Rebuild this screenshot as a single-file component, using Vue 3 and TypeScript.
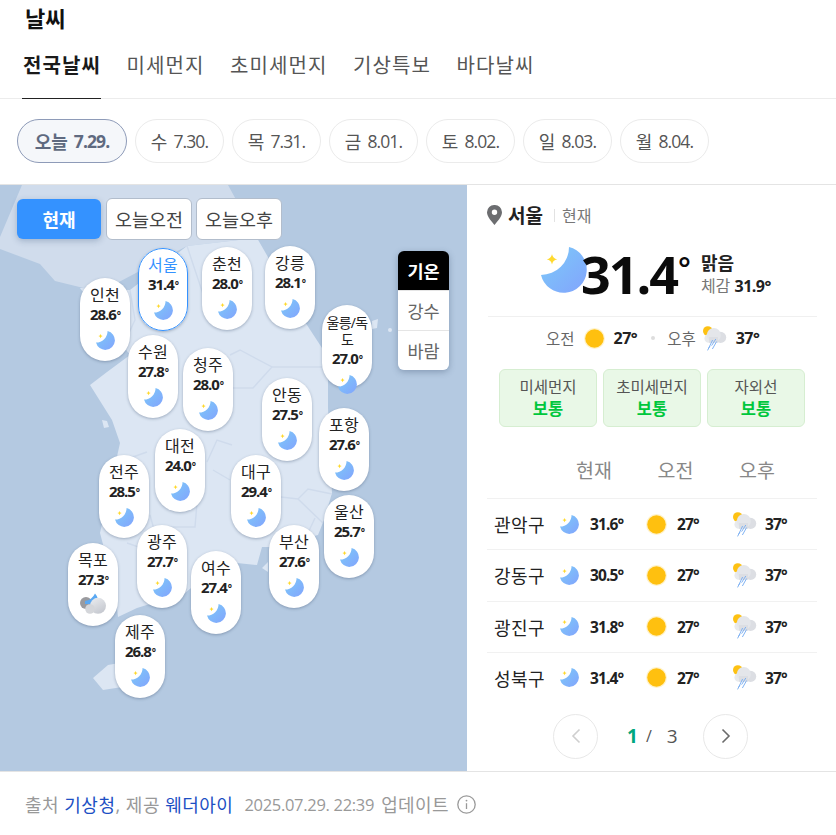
<template>
  <div class="page">
    <svg class="icon-defs" width="0" height="0" aria-hidden="true">
      <defs>
        <linearGradient id="moonFill" x1="0" y1="0" x2="1" y2="1">
          <stop offset="0" stop-color="#7ccbf8" />
          <stop offset="1" stop-color="#82a4fd" />
        </linearGradient>
        <linearGradient id="cloudFill" x1="0" y1="0" x2="0.6" y2="1">
          <stop offset="0" stop-color="#eceef1" />
          <stop offset="1" stop-color="#c6c9d0" />
        </linearGradient>
        <symbol id="moon" viewBox="0 0 46 46">
          <path d="M28 0A23.2 23.2 0 1 1 0 28A28 28 0 0 0 28 0Z" fill="url(#moonFill)" />
          <path d="M11 7Q11.8 11.4 16.2 12.3Q11.8 13.2 11 17.5Q10.2 13.2 5.8 12.3Q10.2 11.4 11 7Z" fill="#ffd92e" />
        </symbol>
        <symbol id="sun" viewBox="0 0 22 22">
          <circle cx="11" cy="11" r="11" fill="#fff3cc" />
          <circle cx="11" cy="11" r="9.7" fill="#ffc00f" />
        </symbol>
        <symbol id="rain" viewBox="0 0 24 25">
          <circle cx="4.8" cy="5" r="4.8" fill="#fdc113" />
          <circle cx="17.6" cy="11.4" r="5.6" fill="#dcdee3" />
          <circle cx="5.8" cy="12.4" r="4.4" fill="#e8eaed" />
          <circle cx="10.8" cy="9" r="7" fill="#e4e6ea" />
          <path d="M6 11H15V16.8H6Z" fill="#dcdee3" />
          <path d="M12.8 13L8.6 19.6M9.6 14L4.6 24.4M13.6 15.5L9.4 23M7 20L5.8 22" stroke="#7fb2f3" stroke-width="1" fill="none" />
        </symbol>
        <symbol id="cloudMoon" viewBox="0 0 26 22">
          <circle cx="6" cy="10" r="6" fill="#9a9a9e" />
          <path d="M5 8Q12 7 15 0.5Q19 5 18 11L5 11Z" fill="#5aa8f2" />
          <circle cx="18" cy="12.8" r="8" fill="url(#cloudFill)" />
          <circle cx="10" cy="16" r="4.8" fill="#d4d6da" />
        </symbol>
      </defs>
    </svg>

    <h1 class="title">날씨</h1>

    <nav class="tabs">
      <a v-for="(t, i) in tabs" :key="t" :class="['tab', { on: i === 0 }]">{{ t }}</a>
    </nav>

    <div class="days">
      <button v-for="(d, i) in days" :key="d.date" type="button" :class="['day', { on: i === 0 }]">
        <span>{{ d.label }}</span><span class="day-date">{{ d.date }}</span>
      </button>
    </div>

    <div class="body">
      <section class="map">
        <svg class="land" viewBox="0 0 467 586" width="467" height="586">
          <g transform="translate(0,-185)">
            <path d="M22 185L0 237V249L40 264L55 281L100 292L187 246L257 238L228 185Z" fill="#d0dcec" />
            <path d="M80 288L130 290L187 246L257 238L307 325L322 348L328 375L328 408L332 493L324 520L318 535L272 547L262 547L257 565L237 563L230 556L185 593L137 608L118 617L115 590L100 533L120 443L112 420L90 385L107 372L130 355Z" fill="#dce6f3" />
            <path d="M102 420L107 421L109 427L104 428ZM268 562L262 568L268 572ZM93 678L108 665L125 662L135 685L103 690ZM372 321L378 319L377 328L372 329Z" fill="#dce6f3" />
            <circle cx="390" cy="330" r="2" fill="#dce6f3" />
            <g fill="none" stroke="#cfdbec" stroke-width="1.4">
              <path d="M130 290L135 320L128 335M187 246L205 300M230 355L240 350L272 367L253 388L230 388M272 367L322 367" />
              <path d="M281 497L298 499L308 489L332 494M298 499L323 523M315 518L307 535" />
              <path d="M213 470L230 480M197 503L195 527L157 527M127 543L147 550L155 533L150 515M147 452L130 458M207 462L217 440L232 445" />
            </g>
          </g>
        </svg>

        <div class="time-btns">
          <button type="button" class="time now">현재</button>
          <button type="button" class="time">오늘오전</button>
          <button type="button" class="time">오늘오후</button>
        </div>

        <div class="layer-btns">
          <button v-for="(l, i) in layers" :key="l" type="button" :class="['layer', { on: i === 0 }]">{{ l }}</button>
        </div>

        <div
          v-for="c in cities"
          :key="c.name"
          :class="['pin', { on: c.name === '서울', long: c.name.length > 3 }]"
          :style="{ left: c.x + 'px', top: c.y + 'px' }"
        >
          <span class="pin-name">{{ c.name }}</span>
          <span class="pin-temp">{{ c.temp }}<i class="pin-deg">°</i></span>
          <svg v-if="c.cloud" class="pin-cloud"><use href="#cloudMoon" /></svg>
          <svg v-else class="pin-moon"><use href="#moon" /></svg>
        </div>
      </section>

      <aside class="panel">
        <div class="place">
          <svg class="marker" viewBox="0 0 15 20" width="15" height="20">
            <path d="M7.5 0A7.3 7.3 0 0 0 0 7.3C0 12 5 17 7.5 20C10 17 15 12 15 7.3A7.3 7.3 0 0 0 7.5 0ZM7.5 10A2.7 2.7 0 1 1 7.5 4.6A2.7 2.7 0 0 1 7.5 10Z" fill="#6c6d70" />
          </svg>
          <strong class="place-name">서울</strong>
          <span class="place-sep"></span>
          <span class="place-now">현재</span>
        </div>

        <div class="now-row">
          <svg class="now-moon"><use href="#moon" /></svg>
          <span class="now-temp">31.4<i class="now-deg">°</i></span>
          <div class="now-info">
            <strong>맑음</strong>
            <div class="feel"><span>체감</span> <b>31.9°</b></div>
          </div>
        </div>

        <div class="ampm">
          <span class="ampm-label">오전</span>
          <svg class="sun-lg"><use href="#sun" /></svg>
          <b class="ampm-temp">27°</b>
          <i class="ampm-dot"></i>
          <span class="ampm-label">오후</span>
          <svg class="rain-lg"><use href="#rain" /></svg>
          <b class="ampm-temp">37°</b>
        </div>

        <div class="chips">
          <div v-for="a in air" :key="a" class="chip">
            <span>{{ a }}</span>
            <strong>보통</strong>
          </div>
        </div>

        <div class="thead">
          <span>현재</span>
          <span>오전</span>
          <span>오후</span>
        </div>
        <div v-for="r in rows" :key="r.name" class="row">
          <span class="row-name">{{ r.name }}</span>
          <div class="cell">
            <svg class="ico"><use href="#moon" /></svg>
            <b>{{ r.temp }}°</b>
          </div>
          <div class="cell">
            <svg class="ico-sun"><use href="#sun" /></svg>
            <b>27°</b>
          </div>
          <div class="cell">
            <svg class="ico-rain"><use href="#rain" /></svg>
            <b>37°</b>
          </div>
        </div>

        <div class="pager">
          <button type="button" class="page-btn">
            <svg viewBox="0 0 12 16" width="12" height="16"><path d="M9.5 1.5L3 8L9.5 14.5" fill="none" stroke="#cfcfcf" stroke-width="1.6" /></svg>
          </button>
          <div class="page-num"><em>1</em><span class="slash">/</span><span>3</span></div>
          <button type="button" class="page-btn">
            <svg viewBox="0 0 12 16" width="12" height="16"><path d="M2.5 1.5L9 8L2.5 14.5" fill="none" stroke="#6b6b6b" stroke-width="1.6" /></svg>
          </button>
        </div>
      </aside>
    </div>

    <footer class="foot">
      <span class="source">출처 <a>기상청</a>, 제공 <a>웨더아이</a></span>
      <span class="updated">2025.07.29. 22:39</span>
      <span class="updated-label">업데이트</span>
      <svg class="info" viewBox="0 0 19 19" width="19" height="19">
        <circle cx="9.5" cy="9.5" r="8.7" fill="none" stroke="#999" stroke-width="1.3" />
        <path d="M9.5 8.2V14" stroke="#999" stroke-width="1.3" />
        <circle cx="9.5" cy="5.6" r="0.9" fill="#999" />
      </svg>
    </footer>
  </div>
</template>

<script setup lang="ts">
interface City {
  name: string
  temp: string
  x: number
  y: number
  cloud?: boolean
}

const tabs = ['전국날씨', '미세먼지', '초미세먼지', '기상특보', '바다날씨']

const days = [
  { label: '오늘', date: '7.29.' },
  { label: '수', date: '7.30.' },
  { label: '목', date: '7.31.' },
  { label: '금', date: '8.01.' },
  { label: '토', date: '8.02.' },
  { label: '일', date: '8.03.' },
  { label: '월', date: '8.04.' },
]

const layers = ['기온', '강수', '바람']

// 지도 영역 기준 좌표
const cities: City[] = [
  { name: '서울', temp: '31.4', x: 138, y: 63 },
  { name: '인천', temp: '28.6', x: 80, y: 93 },
  { name: '춘천', temp: '28.0', x: 202, y: 62 },
  { name: '강릉', temp: '28.1', x: 265, y: 61 },
  { name: '울릉/독도', temp: '27.0', x: 322, y: 120 },
  { name: '수원', temp: '27.8', x: 128, y: 150 },
  { name: '청주', temp: '28.0', x: 183, y: 163 },
  { name: '안동', temp: '27.5', x: 262, y: 193 },
  { name: '포항', temp: '27.6', x: 319, y: 223 },
  { name: '대전', temp: '24.0', x: 155, y: 244 },
  { name: '전주', temp: '28.5', x: 99, y: 270 },
  { name: '대구', temp: '29.4', x: 231, y: 270 },
  { name: '울산', temp: '25.7', x: 324, y: 310 },
  { name: '부산', temp: '27.6', x: 269, y: 340 },
  { name: '광주', temp: '27.7', x: 137, y: 340 },
  { name: '여수', temp: '27.4', x: 191, y: 366 },
  { name: '목포', temp: '27.3', x: 68, y: 358, cloud: true },
  { name: '제주', temp: '26.8', x: 115, y: 430 },
]

const air = ['미세먼지', '초미세먼지', '자외선']

const rows = [
  { name: '관악구', temp: '31.6' },
  { name: '강동구', temp: '30.5' },
  { name: '광진구', temp: '31.8' },
  { name: '성북구', temp: '31.4' },
]
</script>

<style>
html, body { margin: 0; background: #fff; }
</style>

<style scoped>
.page {
  width: 836px;
  height: 835px;
  overflow: hidden;
  font-family: "Open Sans", "Noto Sans CJK KR", sans-serif;
  color: #222;
}

button { font-family: inherit; cursor: pointer; }
.icon-defs { position: absolute; }
i { font-style: normal; }

.title {
  margin: 0;
  height: 36px;
  padding-left: 25px;
  font-size: 22px;
  font-weight: 700;
  line-height: 36px;
  color: #111;
}

/* 탭 */
.tabs {
  display: flex;
  gap: 25.5px;
  height: 62px;
  padding-left: 23px;
  border-bottom: 1px solid #ececec;
}
.tab {
  position: relative;
  font-size: 20px;
  line-height: 60px;
  letter-spacing: 1.1px;
  color: #555;
}
.tab.on { font-weight: 700; color: #1a1a1a; }
.tab.on::after {
  content: "";
  position: absolute;
  left: -1px;
  right: 0;
  bottom: -1px;
  height: 1px;
  background: #222;
}

/* 날짜 */
.days {
  display: flex;
  gap: 8px;
  height: 44px;
  padding: 20px 0 21px 17px;
}
.day {
  display: flex;
  align-items: center;
  justify-content: center;
  gap: 6px;
  width: 89px;
  height: 44px;
  padding: 0;
  border: 1px solid #ebebeb;
  border-radius: 22px;
  background: #fff;
  font-size: 18px;
  color: #555;
}
.day-date { letter-spacing: -0.9px; font-size: 17.5px; }
.day.on {
  width: 110px;
  border-color: #8e9bb8;
  background: #f5f7fa;
  color: #5f6a80;
  font-weight: 700;
}

.body {
  display: flex;
  height: 586px;
  border-top: 1px solid #e4e4e4;
}

/* 지도 */
.map {
  position: relative;
  flex: 0 0 467px;
  background: #b4c9e1;
  overflow: hidden;
}
.land { position: absolute; left: 0; top: 0; }

.time-btns {
  position: absolute;
  left: 17px;
  top: 13px;
  display: flex;
  align-items: center;
  gap: 5px;
}
.time {
  width: 86px;
  height: 42px;
  padding: 0;
  border: 1px solid #b2bdcc;
  border-radius: 6px;
  background: #fff;
  font-size: 18.5px;
  color: #444;
}
.time + .time + .time { margin-left: -1px; }
.time.now {
  width: 84px;
  height: 40px;
  border: 0;
  background: #3492ff;
  color: #fff;
  font-size: 18px;
  font-weight: 700;
  box-shadow: 0 2px 6px rgba(50, 80, 120, 0.3);
}

.layer-btns {
  position: absolute;
  left: 398px;
  top: 66px;
  display: flex;
  flex-direction: column;
  width: 51px;
  border-radius: 6px;
  overflow: hidden;
  box-shadow: 0 2px 6px rgba(50, 70, 100, 0.35);
}
.layer {
  height: 40px;
  padding: 0;
  border: 0;
  border-top: 1px solid #e5e5e5;
  background: #fff;
  font-size: 17.5px;
  color: #666;
}
.layer.on {
  height: 39px;
  border-top: 0;
  background: #000;
  color: #fff;
  font-weight: 700;
}

.pin {
  position: absolute;
  display: flex;
  flex-direction: column;
  align-items: center;
  box-sizing: border-box;
  width: 50px;
  height: 83px;
  padding: 7px 4px 0;
  border-radius: 25px;
  background: #fff;
  box-shadow: 0 1px 3px rgba(60, 80, 110, 0.4);
}
.pin.on { outline: 1px solid #3492ff; outline-offset: -1px; }
.pin.on .pin-name { color: #3492ff; }
.pin-name {
  font-size: 16px;
  line-height: 21px;
  letter-spacing: 0.3px;
  color: #222;
  text-align: center;
}
.pin.long { padding-top: 9px; }
.pin.long .pin-name {
  font-size: 14px;
  line-height: 17px;
  letter-spacing: -0.7px;
  word-break: break-all;
}
.pin-temp {
  font-size: 15px;
  font-weight: 700;
  line-height: 17px;
  letter-spacing: -1.1px;
  color: #222;
}
.pin.long .pin-temp { margin-top: 2px; }
.pin-deg { margin-left: 1px; font-size: 10px; line-height: 0; vertical-align: 1px; }
.pin-moon {
  flex: none;
  width: 19px;
  height: 19px;
  margin-top: 8px;
}
.pin-cloud {
  flex: none;
  width: 26px;
  height: 22px;
  margin-top: 5px;
}

/* 우측 패널 */
.panel {
  flex: 1;
  padding: 0 19px 0 20px;
}
.place {
  display: flex;
  align-items: center;
  height: 60px;
}
.place-name {
  margin-left: 6px;
  font-size: 19px;
  font-weight: 700;
  color: #222;
}
.place-sep {
  width: 1px;
  height: 13px;
  margin: 0 7px 0 11px;
  background: #e2e2e2;
}
.place-now { font-size: 16px; color: #777; }

.now-row {
  display: flex;
  align-items: center;
  box-sizing: border-box;
  height: 72px;
  margin-left: 1px;
  padding-left: 53px;
  border-bottom: 1px solid #f0f0f0;
}
.now-moon { flex: none; width: 46px; height: 46px; margin-bottom: 22px; }
.now-temp {
  margin-left: -6px;
  margin-bottom: 14px;
  font-size: 52px;
  font-weight: 700;
  line-height: 60px;
  letter-spacing: -2px;
  color: #0b0b0b;
}
.now-deg {
  margin-left: 1px;
  font-size: 30px;
  font-weight: 600;
  line-height: 0;
  letter-spacing: 0;
  vertical-align: 15px;
}
.now-info {
  display: flex;
  flex-direction: column;
  margin-left: 10px;
  margin-bottom: 14px;
}
.now-info strong { font-size: 18px; line-height: 24px; color: #222; }
.feel { font-size: 16px; line-height: 22px; color: #777; }
.feel b { font-size: 16px; letter-spacing: -0.5px; color: #222; }

.ampm {
  display: flex;
  align-items: center;
  height: 42px;
  padding-left: 59px;
}
.ampm-label { font-size: 15.5px; color: #666; }
.sun-lg { width: 21px; height: 21px; margin: 0 9px; }
.rain-lg { width: 24px; height: 25px; margin: 0 9px 0 7px; }
.ampm-temp { font-size: 16px; letter-spacing: -0.5px; color: #222; }
.ampm-dot {
  width: 4px;
  height: 4px;
  margin: 0 12px 0 14px;
  border-radius: 50%;
  background: #ddd;
}

.chips {
  display: flex;
  gap: 6px;
  margin: 10px 0 0 12px;
}
.chip {
  display: flex;
  flex-direction: column;
  align-items: center;
  justify-content: center;
  box-sizing: border-box;
  width: 98px;
  height: 58px;
  border: 1px solid #d6eed1;
  border-radius: 6px;
  background: #e9f8e7;
  font-size: 15.5px;
  line-height: 21px;
  color: #555;
}
.chip strong { font-size: 16.5px; color: #00c73c; }

.thead {
  display: grid;
  grid-template-columns: 82px 81px 82px;
  height: 71px;
  box-sizing: border-box;
  padding: 31px 0 0 66px;
  font-size: 19.5px;
  line-height: 26px;
  color: #888;
  text-align: center;
}

.row {
  display: grid;
  grid-template-columns: 73px 87px 86px 1fr;
  align-items: center;
  height: 51.25px;
  box-sizing: border-box;
  border-top: 1px solid #f1f1f1;
}
.row:last-of-type { border-bottom: 1px solid #f1f1f1; height: 52.25px; }
.row-name { padding-left: 7px; font-size: 18px; letter-spacing: 0.5px; color: #222; }
.cell { display: flex; align-items: center; }
.cell b { font-size: 15.5px; letter-spacing: -0.9px; color: #222; }
.ico { width: 19px; height: 19px; margin-right: 11px; }
.ico-sun { width: 21px; height: 21px; margin: 0 10px 0 -1px; }
.ico-rain { width: 24px; height: 25px; margin-right: 8px; }

.pager {
  display: flex;
  align-items: center;
  justify-content: center;
  gap: 29px;
  height: 66px;
  padding-right: 3px;
}
.page-btn {
  display: flex;
  align-items: center;
  justify-content: center;
  width: 45px;
  height: 45px;
  padding: 0;
  border: 1px solid #e8e8e8;
  border-radius: 50%;
  background: #fff;
}
.page-num {
  display: flex;
  align-items: center;
  width: 47px;
  font-size: 19px;
  color: #555;
}
.page-num em { font-style: normal; font-weight: 700; color: #00a77e; }
.slash { margin: 0 15px 0 8px; font-size: 16px; }

.foot {
  display: flex;
  align-items: center;
  box-sizing: border-box;
  height: 63px;
  padding: 2px 0 0 25px;
  border-top: 1px solid #e4e4e4;
  color: #999;
}
.source { font-size: 18px; letter-spacing: 0.5px; }
.foot a { color: #1c4fc4; }
.updated { margin-left: 11px; font-size: 16.5px; letter-spacing: -0.3px; }
.updated-label { margin-left: 7px; font-size: 18px; letter-spacing: 0.4px; }
.info { margin-left: 8px; }
</style>
